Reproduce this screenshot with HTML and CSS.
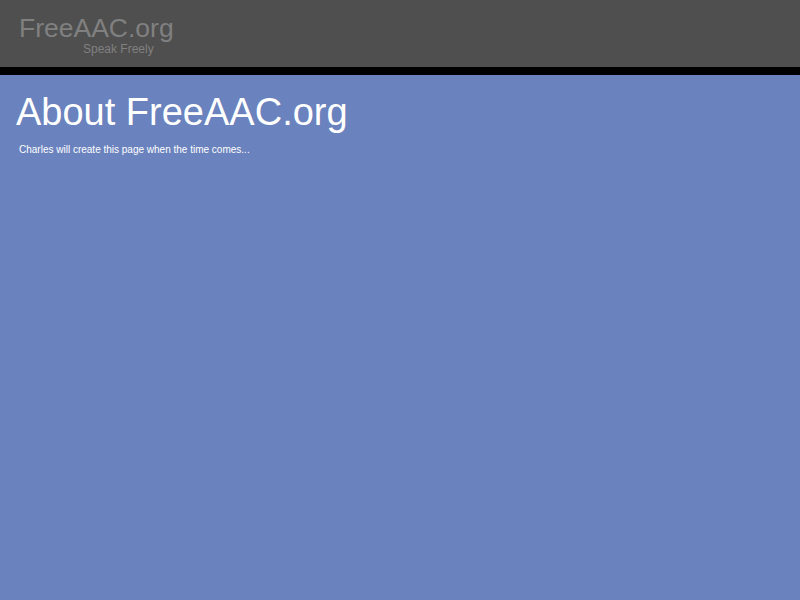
FILE: index.html
```html
<!DOCTYPE html>
<html>
<head>
<meta charset="utf-8">
<link rel="stylesheet" href="styles.css">
</head>
<body>
<header class="header">
  <div class="logo">
    <div class="logo-name">FreeAAC.org</div>
    <div class="logo-tag">Speak Freely</div>
  </div>
</header>
<div class="divider"></div>
<main class="content">
  <h1 class="title">About FreeAAC.org</h1>
  <p class="text">Charles will create this page when the time comes...</p>
</main>
</body>
</html>
```
FILE: styles.css
```css
html, body {
  margin: 0;
  padding: 0;
  height: 100%;
}
body {
  background: #6a82bd;
  font-family: "Liberation Sans", Arial, sans-serif;
}
.header {
  background: #4f4f4f;
  height: 67px;
  box-sizing: border-box;
  padding: 14px 0 0 19px;
}
.logo {
  display: inline-flex;
  flex-direction: column;
  color: #808080;
}
.logo-name {
  font-size: 26.5px;
  line-height: 28px;
}
.logo-tag {
  font-size: 12px;
  line-height: 14px;
  margin-left: 64px;
}
.divider {
  height: 8px;
  background: #000;
}
.content {
  padding: 15px 0 0 16px;
  color: #fff;
}
.title {
  font-size: 38px;
  font-weight: normal;
  line-height: 44px;
  margin: 0;
}
.text {
  font-size: 10px;
  margin: 10px 0 0 3px;
}
```
